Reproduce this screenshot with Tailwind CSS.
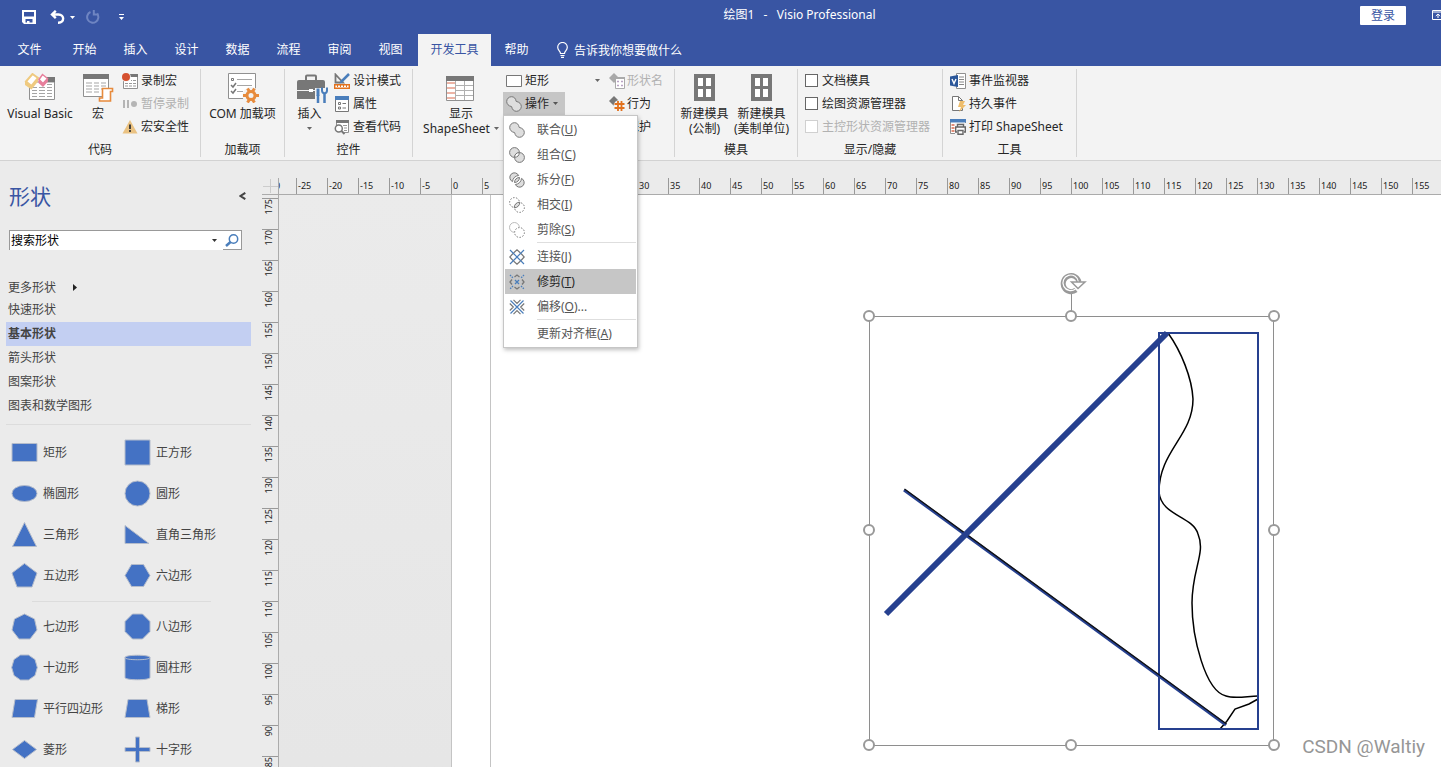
<!DOCTYPE html>
<html lang="zh-CN">
<head>
<meta charset="utf-8">
<title>绘图1 - Visio Professional</title>
<script src="https://cdn.jsdelivr.net/npm/@tailwindcss/browser@4"></script>
</head>
<body class="flex h-screen flex-col overflow-hidden bg-[#ebebeb] font-['Noto_Sans','Noto_Sans_CJK_SC',sans-serif] text-[12px] leading-[15px] text-[#262626]">

<svg class="hidden" aria-hidden="true">
  <symbol id="down" viewBox="0 0 5 3"><path d="M0 0h5L2.500 3z" fill="currentColor"/></symbol>
  <symbol id="union" viewBox="0 0 16 16"><path d="M5.500.7C8 .7 9.600 2.300 10.200 5.400c3.200.6 5.100 2.600 5.100 5A4.900 4.900 0 0 1 10.500 15.300c-2.600 0-4.200-1.600-4.900-4.700C2.500 10 .7 8 .7 5.500A4.800 4.800 0 0 1 5.500.7z" fill="#dedede" stroke="#777"/></symbol>
</svg>

<header class="shrink-0 bg-[#3955a3] text-white">
  <div class="relative flex h-[34px] items-center">
    <div class="z-10 flex items-center pl-[22px]">
      <button aria-label="保存" class="mr-[14px]"><svg class="h-[14px] w-[14px]" viewBox="0 0 14 14"><path d="M0 0h14v14H2l-2-2zm2 2v4.500h10V2zm1.500 7v3.500H5V11h2.500v1.500h3V9z" fill="#fff" fill-rule="evenodd"/></svg></button>
      <button aria-label="撤消"><svg class="h-[14px] w-[15px]" viewBox="0 0 15 14" fill="none" stroke="#fff" stroke-width="2.400"><path d="M5.800.8 2 4.500l3.800 3.700M2.200 4.500h6.300c6.200 0 6.200 8.200 0 8.200H8"/></svg></button>
      <button aria-label="撤消选项" class="mr-[11px] ml-[5px]"><svg class="h-[3px] w-[5px]"><use href="#down"/></svg></button>
      <button aria-label="恢复" class="mr-[19px]"><svg class="h-[14px] w-[14px]" viewBox="0 0 14 14" fill="none" stroke="#6f85c2" stroke-width="2"><path d="M4.500 2A5.600 5.600 0 1 0 11 3.500M7.800 0v4.600h5" /></svg></button>
      <button aria-label="自定义快速访问工具栏"><svg class="h-[7px] w-[5px]" viewBox="0 0 5 7" fill="#fff"><path d="M0 0h5v1H0zM0 3h5L2.500 6z"/></svg></button>
    </div>
    <h1 class="absolute inset-x-0 top-[7px] pl-[158px] text-center">绘图1&nbsp;&nbsp; - &nbsp;&nbsp;Visio Professional</h1>
    <button class="absolute top-[6px] right-[35px] h-[19px] w-[46px] rounded-[1px] bg-white text-[#3955a3]">登录</button>
    <svg class="absolute top-[10px] right-[-3px] h-[10px] w-[12px]" viewBox="0 0 12 10" fill="none" stroke="#fff"><path d="M.5.500h11v9H.5zM0 2h12M6 8V4M3.800 6 6 4l2.200 2"/></svg>
  </div>
  <nav class="flex h-8 items-center">
    <button class="h-8 w-[59px] pb-[2px]">文件</button><button class="h-8 w-[51px] pb-[2px]">开始</button><button class="h-8 w-[51px] pb-[2px]">插入</button><button class="h-8 w-[51px] pb-[2px]">设计</button><button class="h-8 w-[51px] pb-[2px]">数据</button><button class="h-8 w-[51px] pb-[2px]">流程</button><button class="h-8 w-[51px] pb-[2px]">审阅</button><button class="h-8 w-[51px] pb-[2px]">视图</button>
    <button class="ml-[2px] h-8 w-[73px] bg-[#f3f3f3] pb-[2px] text-[#3955a3]">开发工具</button>
    <button class="h-8 w-[51px] pb-[2px]">帮助</button>
    <button class="ml-[15px] flex h-8 items-center gap-[6px]"><svg class="h-4 w-[11px]" viewBox="0 0 11 16" fill="none" stroke="#fff" stroke-width="1.200"><path d="M3.500 11.500c0-2.500-2.800-3-2.800-6.200a4.800 4.800 0 0 1 9.600 0c0 3.200-2.800 3.700-2.800 6.200zM3.500 13.500h4M4 15.400h3"/></svg>告诉我你想要做什么</button>
  </nav>
</header>

<section aria-label="功能区" class="flex h-[95px] shrink-0 border-b border-[#d2d2d2] bg-[#f3f3f3] py-[3px] whitespace-nowrap">
  <div class="flex w-[201px] flex-col border-r border-[#d4d4d4]">
    <div class="flex h-[71px]">
      <button class="flex w-20 flex-col items-center pt-1"><svg class="h-[30px] w-8" viewBox="0 0 32 30"><path d="M5.500 9h25v17.500h-25z" fill="#fff" stroke="#909090"/><path d="M22 4h9v5h-9z" fill="#777"/><path d="M8 14.500h5m2 0h6m2 0h5M8 17.500h5m2 0h6m2 0h5M8 20.500h5m2 0h6m2 0h5M8 23.500h5m2 0h6m2 0h5M23 11.500h5" stroke="#a5a5a5"/><path d="m8.500 1 5.500 4-6.500 8L2 8.500z" fill="#fff" stroke="#efca80" stroke-width="2"/><path d="m1 8 6.500 5L14 5v3.500l-6.500 8L1 12z" fill="#efca80"/><path d="m18.500 1.500 5 4-4.500 5-4-4z" fill="#fff" stroke="#e77f9c" stroke-width="1.500"/><path d="m14.500 6.500 4.500 4 5-5v3L19 14l-4.500-4z" fill="#e77f9c"/></svg><span class="mt-[3px]">Visual Basic</span></button>
      <button class="flex w-9 flex-col items-center pt-1"><svg class="h-[30px] w-8" viewBox="0 0 32 30"><path d="M1.500 2.500h25v21h-25z" fill="#fff" stroke="#909090"/><path d="M1 1h26v5H1z" fill="#777"/><path d="M4 10h6m2 0h5m2 0h5M4 13h6m2 0h5m2 0h5M4 16h6m2 0h5m2 0h5M4 19h6m2 0h5" stroke="#a5a5a5"/><path d="M20.500 15.500h10v3h-2v9.500h-11v-3h3z" fill="#fff" stroke="#e78b3d" stroke-width="1.600"/></svg><span class="mt-[3px]">宏</span></button>
      <div class="ml-[6px] flex flex-col text-left">
        <button class="flex h-[23px] items-center gap-[3px]"><svg class="h-4 w-4" viewBox="0 0 16 16"><path d="M1.500 2.500h14v13h-14z" fill="#fff" stroke="#909090"/><path d="M8 1h8v3H8z" fill="#777"/><path d="M3 10.500h3m1 0h3m1 0h3M3 13h3m1 0h3m1 0h3M9 7.500h1m1 0h3" stroke="#999"/><circle cx="4" cy="4" r="4.800" fill="#f3f3f3"/><circle cx="4" cy="4" r="4" fill="#d5502f"/></svg>录制宏</button>
        <button disabled class="flex h-[23px] items-center gap-[3px] text-[#b1b1b1]"><svg class="h-4 w-4" viewBox="0 0 16 16" fill="#b5b5b5"><path d="M1 4h2v8H1zM5 4h2v8H5z"/><circle cx="12" cy="8" r="3"/></svg>暂停录制</button>
        <button class="flex h-[23px] items-center gap-[3px]"><svg class="h-4 w-4" viewBox="0 0 16 16"><path d="m8 1 7.500 13.500H.5z" fill="#eac282"/><path d="M8 5.500v4.500M8 11v2" stroke="#333" stroke-width="1.800"/></svg>宏安全性</button>
      </div>
    </div>
    <p class="pt-[2px] text-center">代码</p>
  </div>

  <div class="flex w-[84px] flex-col border-r border-[#d4d4d4]">
    <button class="flex h-[71px] flex-col items-center pt-1"><svg class="h-[30px] w-8" viewBox="0 0 32 30"><path d="M1.500.5h27v25h-27z" fill="#fff" stroke="#909090"/><path d="M10 6.500h15M10 12.500h15M10 18.500h6" stroke="#a5a5a5"/><path d="M4.500 5.500h2v2h-2z" fill="none" stroke="#777"/><path d="m4 12 2 2 3-4M4 18l2 2 3-4" fill="none" stroke="#777" stroke-width="1.500"/><circle cx="24" cy="22.500" r="8.500" fill="#f3f3f3"/><circle cx="24" cy="22.500" r="4" fill="none" stroke="#e78b3d" stroke-width="3"/><path d="m20.500 15.500 2 3m3 8 2 3m-11.500-7h3m10 0h3m-4.500-7-2 3m-3 8-2 3" stroke="#e78b3d" stroke-width="3"/></svg><span class="mt-[3px]">COM 加载项</span></button>
    <p class="pt-[2px] text-center">加载项</p>
  </div>

  <div class="flex w-32 flex-col border-r border-[#d4d4d4]">
    <div class="flex h-[71px]">
      <button class="flex w-[49px] flex-col items-center pt-1"><svg class="ml-1 h-[30px] w-8" viewBox="0 0 32 30"><path d="M10 7V3.500Q10 2.500 11 2.500h8q1 0 1 1V7" fill="none" stroke="#777" stroke-width="2"/><path d="M3 7h24q2 0 2 2v17H1V9q0-2 2-2z" fill="#777"/><path d="M1 17.500h28" stroke="#f3f3f3"/><path d="M13 16h4v3h-4z" fill="#fff"/><path d="M19 15h13v15H19z" fill="#f3f3f3"/><path d="M20.500 15.500h3V23h-3z" fill="#4a7ebb"/><path d="M22 22v8M28.500 21v9" stroke="#4a7ebb" stroke-width="2.500"/><path d="M26 14.500v3c0 3.500 5 3.500 5 0v-3" fill="none" stroke="#4a7ebb" stroke-width="2"/></svg><span class="mt-[3px]">插入</span><svg class="mt-[6px] h-[3px] w-[5px] text-[#666]"><use href="#down"/></svg></button>
      <div class="flex flex-col">
        <button class="flex h-[23px] items-center gap-[3px]"><svg class="h-4 w-4" viewBox="0 0 16 16"><path d="M1.500 1.500v8H9z" fill="none" stroke="#777" stroke-width="1.800"/><path d="m8 8 7-7" stroke="#4a7ebb" stroke-width="2.500"/><path d="m5.500 10.500 1.500-4 2.500 2.500z" fill="#4a7ebb"/><path d="M.7 11.700h14.600v3.600H.7z" fill="#fff" stroke="#e2711d" stroke-width="1.400"/><path d="M3.500 12v2m3-2v2m3-2v2m3-2v2" stroke="#e2711d"/></svg>设计模式</button>
        <button class="flex h-[23px] items-center gap-[3px]"><svg class="h-4 w-4" viewBox="0 0 16 16"><path d="M1.500 1.500h13v14h-13z" fill="#fff" stroke="#777"/><path d="M1 0h14v4H1z" fill="#4a7ebb"/><path d="M4.500 6.500h2v2h-2zM4.500 11h2v2h-2z" fill="none" stroke="#777"/><path d="M8.500 7.500H12M8.500 12H12" stroke="#777"/></svg>属性</button>
        <button class="flex h-[23px] items-center gap-[3px]"><svg class="h-4 w-4" viewBox="0 0 16 16"><path d="M2.500 7V1.500h12v12H10" fill="#fff" stroke="#909090"/><path d="M2 1h13v3H2z" fill="#777"/><path d="M9 6.500h4M10 9h3M10 11.500h3" stroke="#999"/><circle cx="4.800" cy="9.500" r="3.500" fill="#fff" stroke="#777" stroke-width="1.500"/><path d="m7.500 12 3 3" stroke="#777" stroke-width="2"/></svg>查看代码</button>
      </div>
    </div>
    <p class="pt-[2px] text-center">控件</p>
  </div>

  <div class="flex w-[262px] flex-col border-r border-[#d4d4d4]">
    <div class="flex h-[71px]">
      <button class="flex w-[90px] flex-col items-center pt-1 pl-[6px]"><svg class="mr-[2px] h-[30px] w-8" viewBox="0 0 32 30"><path d="M2.500 3.500h27v24h-27z" fill="#fff" stroke="#909090"/><path d="M2 3h28v5H2z" fill="#777"/><path d="M11.500 8v19m9-19v19M12 12.500h17M12 17.500h17M12 22.500h17" stroke="#b0b0b0"/><path d="M3 10h8M3 15h8M3 20h8M3 25h8" stroke="#d9694c"/></svg><span class="mt-[3px]">显示</span><span class="flex items-center gap-1">ShapeSheet<svg class="h-[3px] w-[5px] text-[#666]"><use href="#down"/></svg></span></button>
      <div class="relative flex w-[103px] flex-col">
        <button class="flex h-[23px] items-center gap-[3px] pl-[3px]"><svg class="h-4 w-4" viewBox="0 0 16 16"><path d="M.5 2.500h15v11H.5z" fill="#fff" stroke="#777"/></svg>矩形<svg class="mr-[6px] ml-auto h-[3px] w-[5px] text-[#666]"><use href="#down"/></svg></button>
        <button aria-expanded="true" class="flex h-[23px] w-[62px] items-center gap-[3px] bg-[#c6c6c6] pl-[3px]"><svg class="h-4 w-4"><use href="#union"/></svg>操作<svg class="ml-px h-[3px] w-[5px] text-[#555]"><use href="#down"/></svg></button>
        <!-- drop-down of the 操作 button -->
        <div role="menu" class="absolute top-[46px] left-0 z-10 flex w-[135px] flex-col border border-[#c6c6c6] bg-white p-px text-[#555] shadow-[1px_2px_4px_rgba(0,0,0,0.25)]">
          <button role="menuitem" class="flex h-[25px] items-center gap-3 pl-1"><svg class="h-4 w-4"><use href="#union"/></svg><span>联合(<u>U</u>)</span></button>
          <button role="menuitem" class="flex h-[25px] items-center gap-3 pl-1"><svg class="h-4 w-4" viewBox="0 0 16 16" stroke="#777"><circle cx="5.500" cy="5.500" r="4.900" fill="#dedede"/><circle cx="10.500" cy="10.500" r="4.900" fill="#dedede"/><path d="M10.300 5.600a4.900 4.900 0 0 1-4.700 4.700 4.900 4.900 0 0 1 4.700-4.700z" fill="#fff"/></svg><span>组合(<u>C</u>)</span></button>
          <button role="menuitem" class="flex h-[25px] items-center gap-3 pl-1"><svg class="h-4 w-4" viewBox="0 0 16 16" stroke="#777" fill="#dedede"><path d="M3.500 9.600A4.600 4.600 0 1 1 9.600 3.500 6.600 6.600 0 0 0 3.500 9.600z"/><path d="M12.500 6.400a4.600 4.600 0 1 1-6.100 6.100 6.600 6.600 0 0 0 6.100-6.100z"/><path d="M10.500 5.500a5 5 0 0 1-5 5 5 5 0 0 1 5-5z"/></svg><span>拆分(<u>F</u>)</span></button>
          <button role="menuitem" class="flex h-[25px] items-center gap-3 pl-1"><svg class="h-4 w-4" viewBox="0 0 16 16" stroke="#777" fill="none"><circle cx="5.500" cy="5.500" r="4.900" stroke-dasharray="1.500 1.500"/><circle cx="10.500" cy="10.500" r="4.900" stroke-dasharray="1.500 1.500"/><path d="M10.800 5.200a5.400 5.400 0 0 1-5.600 5.600 5.400 5.400 0 0 1 5.600-5.600z" fill="#dedede"/></svg><span>相交(<u>I</u>)</span></button>
          <button role="menuitem" class="flex h-[25px] items-center gap-3 pl-1"><svg class="h-4 w-4" viewBox="0 0 16 16" fill="none"><path d="M5 10.300A4.900 4.900 0 1 1 10.300 5" stroke="#bbb"/><circle cx="10.500" cy="10.500" r="4.900" stroke="#777" stroke-dasharray="1.500 1.500"/></svg><span>剪除(<u>S</u>)</span></button>
          <hr class="mb-px ml-8 border-[#dedede]">
          <button role="menuitem" class="flex h-[25px] items-center gap-3 pl-1"><svg class="h-4 w-4" viewBox="0 0 16 16" fill="none"><path d="M4.500 4 8 .8 11.500 4M4.500 12 8 15.200l3.500-3.200M4 4.500.8 8 4 11.500M12 4.500 15.200 8 12 11.500" stroke="#777" stroke-width="1.200"/><path d="m1 1 3.500 3.500M15 1l-3.500 3.500M1 15l3.500-3.500M15 15l-3.500-3.500M4.500 4.500l7 7M11.500 4.500l-7 7" stroke="#4a7ebb" stroke-width="1.200"/></svg><span>连接(<u>J</u>)</span></button>
          <button role="menuitem" class="flex h-[25px] items-center gap-3 bg-[#c6c6c6] pl-1 text-[#262626]"><svg class="h-4 w-4" viewBox="0 0 16 16" fill="none"><path d="m5.500 3 2.500-2 2.500 2M5.500 13 8 15l2.500-2M3 5.500 1 8l2 2.500M13 5.500 15 8l-2 2.500" stroke="#777" stroke-width="1.300"/><path d="m6 6 4 4m0-4-4 4" stroke="#4a7ebb" stroke-width="1.300"/><path d="m1 1 3 3m8 8 3 3m0-14-3 3m-8 8-3 3" stroke="#4a7ebb" stroke-width="1.300" stroke-dasharray="1.500 1"/></svg><span>修剪(<u>T</u>)</span></button>
          <button role="menuitem" class="flex h-[25px] items-center gap-3 pl-1"><svg class="h-4 w-4" viewBox="0 0 16 16" fill="none"><path d="M4.500.8 8 4.300 11.500.8M4.500 15.200 8 11.700l3.500 3.500M.8 4.500 4.300 8 .8 11.500M15.200 4.500 11.700 8l3.500 3.500" stroke="#777" stroke-width="1.200"/><path d="m1.500 1.500 13 13M14.500 1.500l-13 13" stroke="#4a7ebb" stroke-width="1.200"/></svg><span>偏移(<u>O</u>)...</span></button>
          <hr class="mb-px ml-8 border-[#dedede]">
          <button role="menuitem" class="flex h-[25px] items-center pl-8"><span>更新对齐框(<u>A</u>)</span></button>
        </div>
      </div>
      <div class="ml-[3px] flex flex-col">
        <button disabled class="flex h-[23px] items-center gap-[2px] text-[#b1b1b1]"><svg class="h-4 w-4" viewBox="0 0 16 16"><path d="m5 0 5 5-5 5-5-5z" fill="#aaa"/><path d="M6.500 4.500h9v11h-9z" fill="#fff" stroke="#aaa"/><path d="M6 4h10v2H6z" fill="#aaa"/><path d="M8 8.500h2m2 0h2m-6 4h2m2 0h2" stroke="#b9a2c4" stroke-width="1.500"/></svg>形状名</button>
        <button class="flex h-[23px] items-center gap-[2px]"><svg class="h-4 w-4" viewBox="0 0 16 16"><path d="m5 0 5 5-5 5-5-5z" fill="#777"/><circle cx="10.500" cy="10" r="6" fill="#f3f3f3"/><path d="M9 5v10m3.500-10v10M5.500 8h10m-10 4h10" stroke="#e2711d" stroke-width="1.800"/></svg>行为</button>
        <button class="flex h-[23px] items-center gap-[2px]"><svg class="h-4 w-4" viewBox="0 0 16 16"><path d="M4 7h8v7H4zM6 7V3h4v4" fill="none" stroke="#777"/></svg>保护</button>
      </div>
    </div>
  </div>

  <div class="flex w-[123px] flex-col border-r border-[#d4d4d4]">
    <div class="flex h-[71px] pl-px">
      <button class="flex w-[57px] flex-col items-center pt-1"><svg class="h-[30px] w-8" viewBox="0 0 32 30"><path d="M5 1h21v27H5z" fill="#777"/><path d="M9 5h5v8H9zM17 5h5v8h-5zM9 16h5v8H9zM17 16h5v8h-5z" fill="#fff"/></svg><span class="mt-[3px]">新建模具<br>(公制)</span></button>
      <button class="flex w-[57px] flex-col items-center pt-1"><svg class="h-[30px] w-8" viewBox="0 0 32 30"><path d="M5 1h21v27H5z" fill="#777"/><path d="M9 5h5v8H9zM17 5h5v8h-5zM9 16h5v8H9zM17 16h5v8h-5z" fill="#fff"/></svg><span class="mt-[3px]">新建模具<br>(美制单位)</span></button>
    </div>
    <p class="pt-[2px] text-center">模具</p>
  </div>

  <div class="flex w-[145px] flex-col border-r border-[#d4d4d4]">
    <div class="flex h-[71px] flex-col pl-[7px]">
      <label class="flex h-[23px] items-center gap-1"><input type="checkbox" class="h-[13px] w-[13px] appearance-none border border-[#666] bg-white">文档模具</label>
      <label class="flex h-[23px] items-center gap-1"><input type="checkbox" class="h-[13px] w-[13px] appearance-none border border-[#666] bg-white">绘图资源管理器</label>
      <label class="flex h-[23px] items-center gap-1 text-[#b1b1b1]"><input type="checkbox" disabled class="h-[13px] w-[13px] appearance-none border border-[#d0d0d0] bg-white">主控形状资源管理器</label>
    </div>
    <p class="pt-[2px] text-center">显示/隐藏</p>
  </div>

  <div class="flex w-[134px] flex-col border-r border-[#d4d4d4]">
    <div class="flex h-[71px] flex-col pl-[7px]">
      <button class="flex h-[23px] items-center gap-[3px]"><svg class="h-4 w-4" viewBox="0 0 16 16"><path d="M6.500.5h9v15h-9z" fill="#fff" stroke="#909090"/><path d="M9 4h5M9 6.500h5M9 9h5M9 11.500h5" stroke="#888"/><path d="m0 3.500 8-1.500v12l-8-1.500z" fill="#2b579a"/><path d="m2 6 2 4.500L6 6" fill="none" stroke="#fff" stroke-width="1.400"/></svg>事件监视器</button>
      <button class="flex h-[23px] items-center gap-[3px]"><svg class="h-4 w-4" viewBox="0 0 16 16"><path d="M2.500.5h6l4 4v10h-10z" fill="#fff" stroke="#777"/><path d="M8.500.5v4h4" fill="none" stroke="#777"/><path d="M10 5h5l-2 4h3l-7 7 2-5H8z" fill="#eebd6b"/></svg>持久事件</button>
      <button class="flex h-[23px] items-center gap-[3px]"><svg class="h-4 w-4" viewBox="0 0 16 16"><path d="M.5.500h15v14H.5z" fill="#fff" stroke="#909090"/><path d="M0 0h16v3.500H0z" fill="#4a7ebb"/><path d="M1.500 6h3m-3 3h3m-3 3h3" stroke="#d9694c" stroke-width="1.300"/><path d="M5 4h11v12H5z" fill="#f3f3f3"/><path d="M7.500 8V5.500h6V8M7 13H5.700V8h9.600v5H14M8 11.500h5v3.800H8z" fill="#fff" stroke="#666" stroke-width="1.400"/></svg>打印 ShapeSheet</button>
    </div>
    <p class="pt-[2px] text-center">工具</p>
  </div>
</section>

<main class="flex min-h-0 flex-1">
  <aside class="w-[262px] shrink-0 overflow-hidden pr-[11px] pl-[6px] text-[#444]">
    <div class="mt-[21px] flex h-[28px] items-center justify-between pr-[5px] pl-[3px]">
      <h2 class="text-[21px] leading-7 text-[#3955a3]">形状</h2>
      <button aria-label="最小化形状窗口"><svg class="h-2 w-[7px]" viewBox="0 0 7 8" fill="none" stroke="#444" stroke-width="2"><path d="M6.300.8 1.500 4l4.800 3.200"/></svg></button>
    </div>
    <div class="mt-[20px] mr-[9px] ml-[3px] flex h-5 items-stretch border-t border-l border-[#999] bg-white">
      <input aria-label="搜索形状" value="搜索形状" class="min-w-0 flex-1 pl-px text-black outline-none">
      <button aria-label="搜索选项" class="px-[6px] text-[#333]"><svg class="h-[3px] w-[5px]"><use href="#down"/></svg></button>
      <button aria-label="搜索" class="flex w-[19px] items-center justify-center border-r border-b border-[#999]"><svg class="h-[13px] w-[14px]" viewBox="0 0 14 13" fill="none" stroke="#4a7ebb"><circle cx="8.500" cy="5" r="4.200" stroke-width="1.500"/><path d="M5.500 8 1 12" stroke-width="2.400"/></svg></button>
    </div>
    <ul class="mt-[26px]">
      <li class="flex h-[22px] items-center gap-4 pl-[2px]">更多形状<svg class="h-[7px] w-[5px]" viewBox="0 0 5 7"><path d="m1 0 4 3.500L1 7z" fill="#222"/></svg></li>
      <li class="flex h-6 items-center pb-[2px] pl-[2px]">快速形状</li>
      <li class="flex h-6 items-center bg-[#c3cff2] pb-[2px] pl-[2px] font-bold">基本形状</li>
      <li class="flex h-6 items-center pb-[2px] pl-[2px]">箭头形状</li>
      <li class="flex h-6 items-center pb-[2px] pl-[2px]">图案形状</li>
      <li class="flex h-6 items-center pb-[2px] pl-[2px]">图表和数学图形</li>
    </ul>
    <hr class="mt-[6px] border-[#dcdcdc]">
    <div class="mt-[7px] grid auto-rows-[41px] grid-cols-[113px_1fr] items-center pl-[5px] [&>div]:flex [&>div]:items-center [&>div]:gap-[5px] [&_svg]:h-[27px] [&_svg]:w-[27px] [&_svg]:fill-[#4472c4] [&_svg]:stroke-[#b4bccb]">
      <div><svg viewBox="0 0 27 27"><path d="M1 4.500h25v18H1z"/></svg>矩形</div>
      <div><svg viewBox="0 0 27 27"><path d="M1 1h25v25H1z"/></svg>正方形</div>
      <div><svg viewBox="0 0 27 27"><ellipse cx="13.500" cy="13.500" rx="12.500" ry="8"/></svg>椭圆形</div>
      <div><svg viewBox="0 0 27 27"><circle cx="13.500" cy="13.500" r="12.500"/></svg>圆形</div>
      <div><svg viewBox="0 0 27 27"><path d="m13.500 1.500 12 24h-24z"/></svg>三角形</div>
      <div><svg viewBox="0 0 27 27"><path d="M1 4.500v18h24z"/></svg>直角三角形</div>
      <div><svg viewBox="0 0 27 27"><path d="M13.500 1.500 26 11l-5 14H6L1 11z"/></svg>五边形</div>
      <div><svg viewBox="0 0 27 27"><path d="M7.500 2.500h12L26 13.500l-6.500 11h-12L1 13.500z"/></svg>六边形</div>
    </div>
    <hr class="mt-[5px] mr-10 ml-[26px] border-[#dcdcdc]">
    <div class="mt-1 grid auto-rows-[41px] grid-cols-[113px_1fr] items-center pl-[5px] [&>div]:flex [&>div]:items-center [&>div]:gap-[5px] [&_svg]:h-[27px] [&_svg]:w-[27px] [&_svg]:fill-[#4472c4] [&_svg]:stroke-[#b4bccb]">
      <div><svg viewBox="0 0 27 27"><path d="m13.500 1 10 5 2.500 11-7 9H8l-7-9L3.500 6z"/></svg>七边形</div>
      <div><svg viewBox="0 0 27 27"><path d="M8.500 1h10L26 8.500v10L18.500 26h-10L1 18.500v-10z"/></svg>八边形</div>
      <div><svg viewBox="0 0 27 27"><path d="M9.500 1h8L24 5.500l2.300 8-2.300 8-6.500 4.500h-8L3 21.500l-2.300-8L3 5.500z"/></svg>十边形</div>
      <div><svg viewBox="0 0 27 27"><path d="M1 3.500C1 .5 26 .5 26 3.500v20c0 3-25 3-25 0z"/><path d="M1 3.500c0 3 25 3 25 0" fill="none"/></svg>圆柱形</div>
      <div><svg viewBox="0 0 27 27"><path d="M4 4.500h22.500l-3 18H1z"/></svg>平行四边形</div>
      <div><svg viewBox="0 0 27 27"><path d="M4 4.500h19l3 18H1z"/></svg>梯形</div>
      <div><svg viewBox="0 0 27 27"><path d="m13.500 4.500 12 9-12 9-12-9z"/></svg>菱形</div>
      <div><svg viewBox="0 0 27 27"><path d="M11.500 1h4v10.500H26v4H15.500V26h-4V15.500H1v-4h10.500z"/></svg>十字形</div>
    </div>
  </aside>

  <div class="flex min-w-0 flex-1 flex-col pt-[17px]">
    <div class="flex h-[17px] shrink-0 border-b border-[#ababab]">
      <div class="w-[17px] shrink-0 border-r border-[#ababab]"><svg class="h-4 w-4" viewBox="0 0 16 16"><path d="M8.500 1v14M1 8.500h15" stroke="#ccc"/></svg></div>
      <div class="min-w-0 flex-1 overflow-hidden"><div id="ruler-x" class="ml-[-14px] flex h-4"></div></div>
    </div>
    <div class="flex min-h-0 flex-1">
      <div class="w-[17px] shrink-0 overflow-hidden border-r border-[#ababab] pt-[3px]"><div id="ruler-y"></div></div>
      <div class="relative flex min-w-0 flex-1 overflow-hidden bg-linear-to-b from-[#ebebeb] to-[#e6e6e6]">
        <div class="ml-[172px] flex-1 border-l border-[#c4c4c4] bg-white"><div class="ml-[38px] h-full border-l border-[#c4c4c4]"></div></div>
        <svg class="absolute top-[65px] left-[571px] h-[507px] w-[440px]" viewBox="0 0 440 507" fill="none">
          <path d="M19.500 56.500h404v429h-404zM221.500 56V33" stroke="#8e8e8e"/>
          <path d="M318 73c13 18 24 45 25 66 0 37-34 52-34 93 2 24 34 24 39 42 8 19-6 35-6 69 0 34 13 88 34 93 9 3 22 0 32 0" stroke="#000" stroke-width="1.500"/>
          <path d="m408 439-9 5-14 5-8 12-7 8" stroke="#000" stroke-width="1.500"/>
          <path d="M309 73h99v396h-99z" stroke="#26408f" stroke-width="2"/>
          <path d="m54 230 322 235" stroke="#26408f" stroke-width="3"/>
          <path d="m54.500 229 322 235" stroke="#111" stroke-width="1.300"/>
          <path d="M36 354 317 73" stroke="#26408f" stroke-width="6"/>
          <g stroke="#999" stroke-width="2" fill="#fff"><circle cx="19" cy="56" r="5"/><circle cx="221" cy="56" r="5"/><circle cx="424" cy="56" r="5"/><circle cx="19" cy="270" r="5"/><circle cx="424" cy="270" r="5"/><circle cx="19" cy="485" r="5"/><circle cx="221" cy="485" r="5"/><circle cx="424" cy="485" r="5"/></g>
          <path d="M226 30a8 8 0 1 1 3-8" stroke="#999" stroke-width="5"/>
          <path d="M225.500 29a7.800 7.800 0 1 1 3-7" stroke="#fff" stroke-width="1.200"/>
          <path d="M221.500 22h13.500l-7 6.500z" fill="#fff" stroke="#999" stroke-width="1.500"/>
        </svg>
        <p class="absolute right-4 bottom-2 font-[Roboto,sans-serif] text-[19px] leading-6 text-[#969696]">CSDN @Waltiy</p>
      </div>
    </div>
  </div>
</main>

<script>
  // One labelled tick every 31px; the horizontal ruler fills the window's width.
  const rulerX = document.getElementById('ruler-x');
  const rulerY = document.getElementById('ruler-y');
  const columns = Math.floor((rulerX.clientWidth - 14) / 31) + 1;
  for (let i = 0; i < columns; i++) {
    rulerX.insertAdjacentHTML('beforeend', `<span class="w-[31px] shrink-0 border-l border-[#999] pl-px text-[9px] leading-[15px] text-[#1a1a1a]">${-30 + i * 5}</span>`);
  }
  for (let v = 175; v >= 0; v -= 5) {
    rulerY.insertAdjacentHTML('beforeend', `<div class="h-[31px] border-t border-[#999] text-[9px] text-[#1a1a1a]"><span class="block rotate-180 text-right leading-[14px] [writing-mode:vertical-rl]">${v}</span></div>`);
  }
</script>
</body>
</html>
